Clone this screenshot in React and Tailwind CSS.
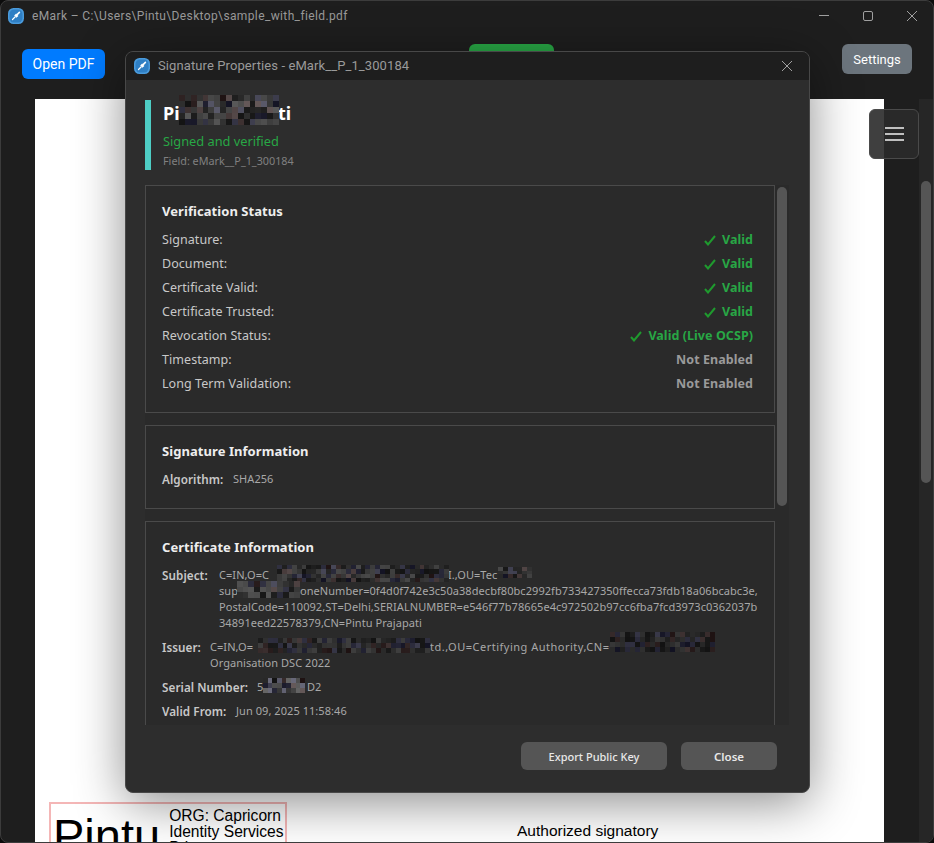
const ui = { fontFamily: '"Noto Sans", sans-serif' }

// pixelated blur blocks, colours come from a small seeded generator
const Mosaic = ({ width, height, cell = 5, seed = 1, bright = 70, className = '' }) => {
  const cols = Math.ceil(width / cell)
  const rows = Math.ceil(height / cell)
  let s = seed * 9301 + 49297
  const next = () => {
    s = (s * 9301 + 49297) % 233280
    return s / 233280
  }
  const cells = []
  for (let i = 0; i < cols * rows; i++) {
    const v = Math.floor(18 + next() * bright)
    const tint = next()
    const r = tint > 0.85 ? v + 12 : v
    const b = tint < 0.2 ? v + 16 : v
    cells.push(<span key={i} style={{ background: `rgb(${r},${v},${b})` }} />)
  }
  return (
    <span
      className={`absolute grid ${className}`}
      style={{ width, height, gridTemplateColumns: `repeat(${cols}, 1fr)`, gridTemplateRows: `repeat(${rows}, 1fr)` }}
    >
      {cells}
    </span>
  )
}

const AppIcon = ({ className = '' }) => (
  <svg viewBox="0 0 16 16" className={className}>
    <rect x="0" y="0" width="16" height="16" rx="5.5" fill="#4a9bdc" />
    <rect x="1.5" y="1.5" width="13" height="13" rx="4.5" fill="#2f7fc4" />
    <path d="M4.5 11.5 L7 9" stroke="#fff" strokeWidth="1.2" strokeLinecap="round" />
    <path d="M6.2 7.6 L8.4 9.8 L10.4 8 L8.2 5.6 Z" fill="#fff" />
    <path d="M9.4 6.4 L11.4 4.4" stroke="#fff" strokeWidth="1.6" strokeLinecap="round" />
  </svg>
)

const CloseIcon = ({ className = '' }) => (
  <svg viewBox="0 0 10 10" className={className} fill="none" stroke="#a0a0a0" strokeWidth="1">
    <path d="M0 0 L10 10 M10 0 L0 10" />
  </svg>
)

const CheckIcon = () => (
  <svg viewBox="0 0 12 11" className="h-[11px] w-[12px]" fill="none" stroke="#1f9a2e" strokeWidth="2">
    <path d="M1 6 L4 9.5 L11 1" />
  </svg>
)

const StatusRow = ({ label, value, ok = true }) => (
  <div className="flex h-6 items-center justify-between text-[12.5px]">
    <span className="text-[#c8c8c8]">{label}</span>
    <span className={`flex items-center gap-[6px] font-bold ${ok ? 'text-[#28a745]' : 'text-[#9a9a9a]'}`}>
      {ok && <CheckIcon />}
      {value}
    </span>
  </div>
)

const Panel = ({ title, height, children }) => (
  <div className="shrink-0 border border-[#4a4a4a] bg-[#2a2a2a] pl-4 pr-[21px] pt-4" style={{ height }}>
    <h3 className="mb-2 text-[13px] font-bold leading-[18px] text-[#eeeeee]">{title}</h3>
    {children}
  </div>
)

const Label = ({ width, children }) => (
  <span className="shrink-0 text-[11.7px] font-semibold text-[#c8c8c8]" style={{ width }}>
    {children}
  </span>
)

const statuses = [
  ['Signature:', 'Valid'],
  ['Document:', 'Valid'],
  ['Certificate Valid:', 'Valid'],
  ['Certificate Trusted:', 'Valid'],
  ['Revocation Status:', 'Valid (Live OCSP)'],
  ['Timestamp:', 'Not Enabled', false],
  ['Long Term Validation:', 'Not Enabled', false],
]

const SignatureDialog = () => (
  <div
    className="absolute left-[124px] top-[50px] flex h-[742px] w-[685px] flex-col overflow-hidden rounded-lg border border-[#484848] bg-[#2d2d2d] shadow-[0_10px_50px_rgba(0,0,0,0.45)]"
    style={ui}
  >
    <div className="flex h-[28px] shrink-0 items-center bg-[#1e1e1e] pl-2 pr-[17px]">
      <AppIcon className="h-4 w-4" />
      <span className="ml-2 text-[13px] tracking-[0.1px] text-[#9a9a9a]" style={{ fontFamily: 'Roboto, sans-serif' }}>
        Signature Properties - eMark__P_1_300184
      </span>
      <CloseIcon className="ml-auto h-[10px] w-[10px]" />
    </div>

    {/* signer header */}
    <div className="ml-[19px] mt-5 flex h-[70px] shrink-0 flex-col border-l-[6px] border-[#4ecdc4] pl-3">
      <div className="relative h-[26px] text-[18px] font-bold leading-[26px] text-white">
        <span className="inline-block w-[16px]">Pi</span>
        <span className="inline-block w-[99px]" />ti
        <Mosaic width={100} height={30} cell={6} seed={3} bright={75} className="left-[16px] top-[-5px]" />
      </div>
      <div className="mt-[5px] text-[12.8px] leading-[20px] text-[#28a745]">Signed and verified</div>
      <div className="mt-[3px] text-[10.8px] leading-[14px] text-[#808080]">Field: eMark__P_1_300184</div>
    </div>

    {/* scroll area */}
    <div className="ml-[19px] mt-[15px] flex h-[540px] w-[644px] shrink-0 overflow-hidden bg-[#2a2a2a]">
      <div className="flex w-[630px] shrink-0 flex-col gap-3 text-[11px] tracking-[0.06px] text-[#a8a8a8]">
        <Panel title="Verification Status" height={228}>
          {statuses.map(([label, value, ok]) => (
            <StatusRow key={label} label={label} value={value} ok={ok} />
          ))}
        </Panel>

        <Panel title="Signature Information" height={84}>
          <div className="mt-[11px] flex leading-4">
            <Label width={71}>Algorithm:</Label>
            <span>SHA256</span>
          </div>
        </Panel>

        <Panel title="Certificate Information" height={230}>
          <div className="mt-[11px] flex leading-4">
            <Label width={57}>Subject:</Label>
            <div className="whitespace-nowrap">
              <div className="relative">
                <span className="inline-block w-[229px]">C=IN,O=C</span>
                <span className="inline-block w-[50px]">I.,OU=Tec</span>
                <Mosaic width={172} height={17} cell={5} seed={7} bright={55} className="left-[58px] top-[-2px]" />
                <Mosaic width={34} height={11} cell={5} seed={11} bright={60} className="left-[279px] top-0" />
              </div>
              <div className="relative">
                <span className="inline-block w-[81px]">sup</span>
                oneNumber=0f4d0f742e3c50a38decbf80bc2992fb733427350ffecca73fdb18a06bcabc3e,
                <Mosaic width={63} height={17} cell={6} seed={5} bright={70} className="left-[18px] top-[-2px]" />
              </div>
              <div>PostalCode=110092,ST=Delhi,SERIALNUMBER=e546f77b78665e4c972502b97cc6fba7fcd3973c0362037b</div>
              <div>34891eed22578379,CN=Pintu Prajapati</div>
            </div>
          </div>
          <div className="mt-2 flex leading-4">
            <Label width={48}>Issuer:</Label>
            <div className="whitespace-nowrap">
              <div className="relative">
                <span className="inline-block w-[220px]">C=IN,O=</span>
                <span className="tracking-[0.5px]">td.,OU=Certifying Authority,CN=C</span>
                <Mosaic width={172} height={15} cell={5} seed={9} bright={45} className="left-[48px] top-[-1px]" />
                <Mosaic width={105} height={20} cell={5} seed={13} bright={40} className="left-[400px] top-[-7px]" />
              </div>
              <div>Organisation DSC 2022</div>
            </div>
          </div>
          <div className="mt-2 flex leading-4">
            <Label width={95}>Serial Number:</Label>
            <div className="relative">
              <span className="inline-block w-[50px]">5</span>D2
              <Mosaic width={42} height={15} cell={5} seed={15} bright={90} className="left-[6px] top-[-1px]" />
            </div>
          </div>
          <div className="mt-2 flex leading-4">
            <Label width={74}>Valid From:</Label>
            <span>Jun 09, 2025 11:58:46</span>
          </div>
        </Panel>
      </div>
      {/* dialog scrollbar */}
      <div className="ml-[2px] w-[10px] shrink-0 pt-[2px]">
        <div className="h-[319px] rounded-[5px] bg-[#555555]" />
      </div>
    </div>

    <div className="mr-[32px] mt-[17px] flex justify-end gap-[14px] text-[11px] font-medium text-[#e8e8e8]">
      <button className="h-[28px] w-[146px] rounded-md bg-[#555555] pt-[2px]">Export Public Key</button>
      <button className="h-[28px] w-[96px] rounded-md bg-[#555555] pt-[2px] text-[11.5px] font-semibold">Close</button>
    </div>
  </div>
)

const App = () => (
  <div className="h-[843px] w-[934px] overflow-hidden bg-[#0c0c0c]">
    <div className="relative flex h-full flex-col overflow-hidden rounded-lg border border-[#3c3c3c] bg-[#1e1e1e]" style={{ fontFamily: 'Roboto, sans-serif' }}>
      {/* window title bar */}
      <div className="flex h-[31px] shrink-0 items-center pb-[2px] pl-[7px]">
        <AppIcon className="h-4 w-4" />
        <span className="ml-2 text-[12px] tracking-[0.37px] text-[#9a9a9a]">eMark – C:\Users\Pintu\Desktop\sample_with_field.pdf</span>
        <div className="ml-auto flex items-center gap-[34px] pr-4">
          <div className="h-px w-[10px] bg-[#a0a0a0]" />
          <div className="h-[10px] w-[10px] rounded-[2px] border border-[#a0a0a0]" />
          <CloseIcon className="h-[10px] w-[10px]" />
        </div>
      </div>

      {/* toolbar */}
      <div className="flex h-[67px] shrink-0 items-start px-[21px] pt-3 text-[14px] text-white">
        <button className="mt-[5px] h-[30px] w-[83px] rounded-md bg-[#007bff]">Open PDF</button>
        <div className="ml-[364px] h-[30px] w-[85px] rounded-md bg-[#28a745]" />
        <button className="ml-auto h-[30px] w-[70px] rounded-md bg-[#6c757d] pt-[1px] text-[13px]">Settings</button>
      </div>

      {/* pdf viewer */}
      <div className="flex min-h-0 flex-1 pl-[34px]">
        <div className="h-full w-[849px] shrink-0 overflow-hidden bg-white pl-[14px] pt-[703px] text-black" style={{ fontFamily: '"Liberation Sans", sans-serif' }}>
          <div className="flex items-start">
            <div className="flex h-[120px] w-[238px] shrink-0 border-2 border-[#f4b6b6] pl-[2px]">
              <span className="mt-[2px] text-[47px] leading-[60px]">Pintu</span>
              <div className="ml-[9px] mt-[4px] whitespace-nowrap text-[15.6px] leading-4">
                ORG: Capricorn<br />Identity Services<br />Private
              </div>
            </div>
            <span className="ml-[230px] mt-[20px] text-[15.5px] leading-[18px]">Authorized signatory</span>
          </div>
        </div>
        <div className="ml-auto w-[14px] shrink-0 bg-[#262626] pl-[2px] pt-[82px]">
          <div className="h-[302px] w-[10px] rounded-[5px] bg-[#555555]" />
        </div>
      </div>

      {/* floating menu button */}
      <div className="absolute left-[868px] top-[108px] flex h-[50px] w-[50px] flex-col items-center justify-center gap-1 rounded-md border border-[#4a4a4a] bg-[rgba(42,42,42,0.9)] pl-[1px]">
        <div className="h-[2px] w-[19px] bg-[#c0c0c0]" />
        <div className="h-[2px] w-[19px] bg-[#c0c0c0]" />
        <div className="h-[2px] w-[19px] bg-[#c0c0c0]" />
      </div>

      <SignatureDialog />
    </div>
  </div>
)

export default App
